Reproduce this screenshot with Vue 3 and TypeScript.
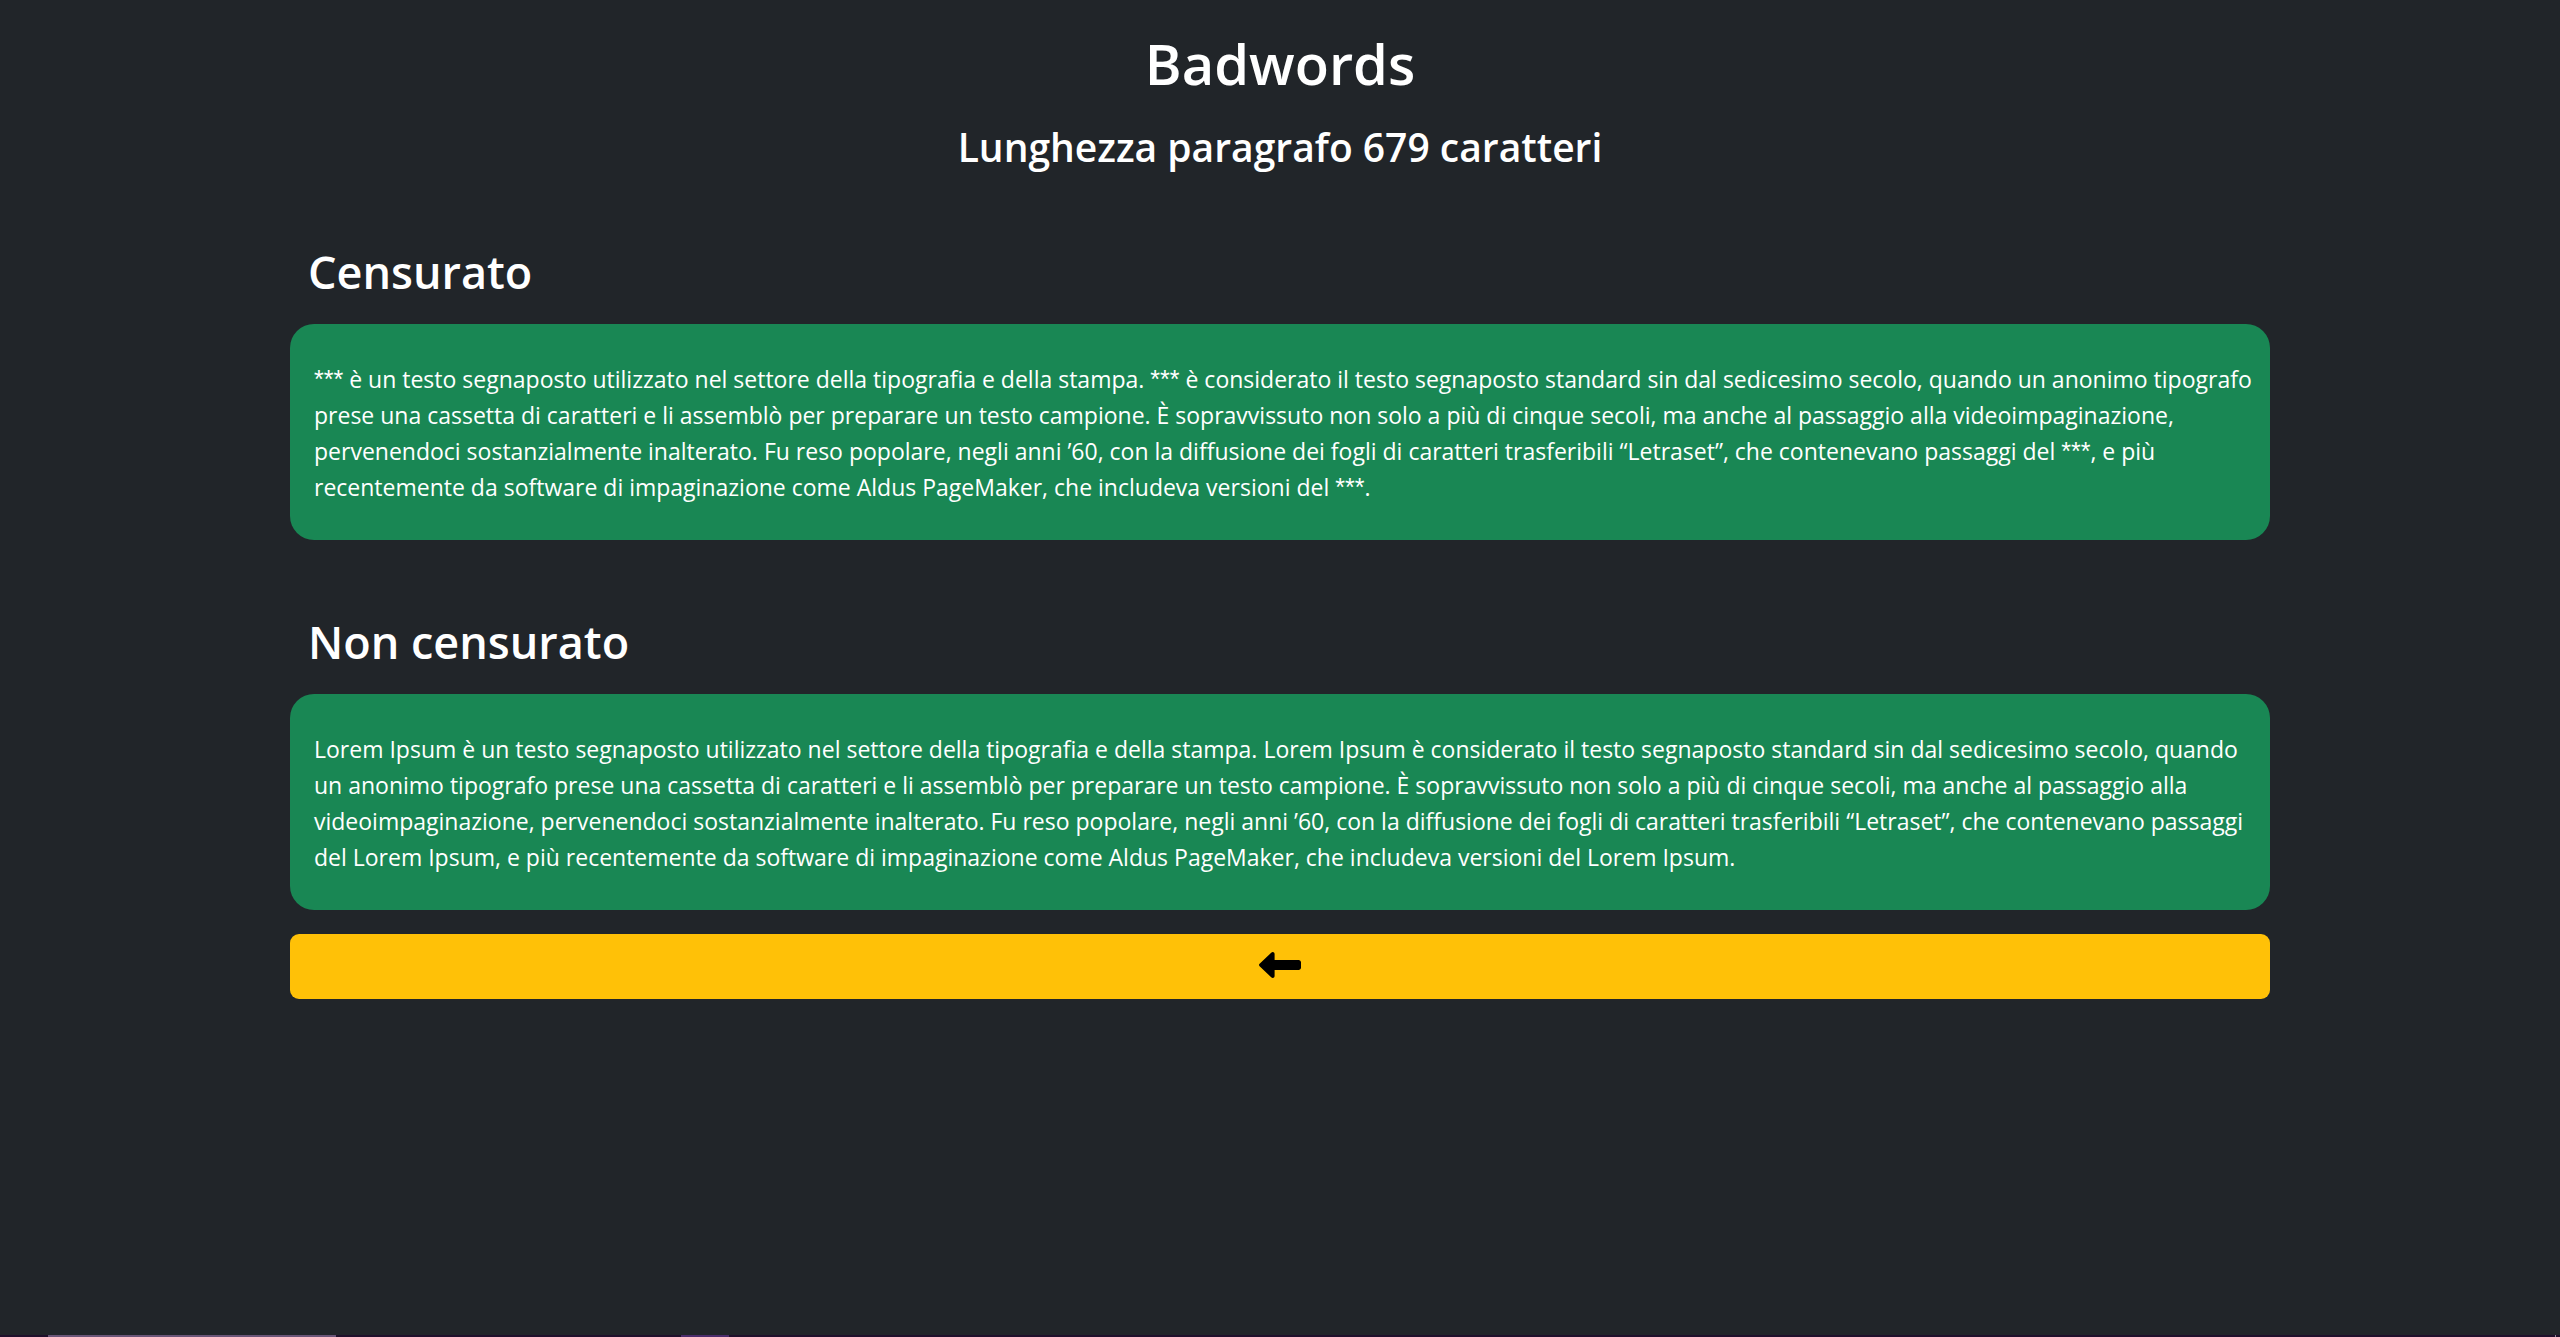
<script setup lang="ts">
interface Block {
  id: string
  title: string
  parts: string[]
}

const badword = 'Lorem Ipsum'
const mask = '***'

const original: string =
  'Lorem Ipsum è un testo segnaposto utilizzato nel settore della tipografia e della stampa. Lorem Ipsum è considerato il testo segnaposto standard sin dal sedicesimo secolo, quando un anonimo tipografo prese una cassetta di caratteri e li assemblò per preparare un testo campione. È sopravvissuto non solo a più di cinque secoli, ma anche al passaggio alla videoimpaginazione, pervenendoci sostanzialmente inalterato. Fu reso popolare, negli anni ’60, con la diffusione dei fogli di caratteri trasferibili “Letraset”, che contenevano passaggi del Lorem Ipsum, e più recentemente da software di impaginazione come Aldus PageMaker, che includeva versioni del Lorem Ipsum.'

const length = 679

// The censored block shows the mask between each pair of neighbouring parts.
const blocks: Block[] = [
  { id: 'censored', title: 'Censurato', parts: original.split(badword) },
  { id: 'plain', title: 'Non censurato', parts: [original] },
]

function goBack(): void {
  window.history.back()
}
</script>

<template>
  <div class="page">
    <main class="container">
      <header class="heading">
        <h1>Badwords</h1>
        <h3>Lunghezza paragrafo {{ length }} caratteri</h3>
      </header>

      <section v-for="block in blocks" :key="block.id" class="block" :aria-labelledby="block.id">
        <h2 :id="block.id">{{ block.title }}</h2>
        <div class="card">
          <p>
            <template v-for="(part, i) in block.parts" :key="i"><span v-if="i > 0" class="mask">{{ mask }}</span>{{ part }}</template>
          </p>
        </div>
      </section>

      <button class="back" type="button" aria-label="Indietro" @click="goBack">
        <svg viewBox="0 0 42 26" width="42" height="26" aria-hidden="true">
          <path
            d="M0.6 11.8 12.2 0.7C13.6-.6 15.6.2 15.6 2V8H39.5C41 8 42 9 42 10.5V15.5C42 17 41 18 39.5 18H15.6V24C15.6 25.8 13.6 26.6 12.2 25.3L0.6 14.2C-.2 13.4-.2 12.6.6 11.8Z"
          />
        </svg>
      </button>
    </main>

    <div class="taskbar" aria-hidden="true">
      <span class="tab tab-wide"></span>
      <span class="tab tab-small"></span>
      <span class="divider"></span>
    </div>
  </div>
</template>

<style>
body {
  margin: 0;
  background: #212529;
}
</style>

<style scoped>
.page {
  display: flex;
  flex-direction: column;
  min-height: 100vh;
  background: #212529;
  color: #fff;
  font-family: 'Segoe UI', 'Open Sans', 'Noto Sans', sans-serif;
  font-size: 23px;
  line-height: 36px;
}

.container {
  box-sizing: border-box;
  flex: 1;
  width: 100%;
  max-width: 1980px;
  margin: 0 auto;
  padding-top: 27px;
}

h1,
h2,
h3,
p {
  margin: 0;
}

h1,
h2,
h3 {
  font-weight: 600;
}

.heading {
  display: flex;
  flex-direction: column;
  gap: 24px;
  text-align: center;
}

h1 {
  font-size: 56px;
  line-height: 72px;
}

h2 {
  padding: 0 18px 23px;
  font-size: 45px;
  line-height: 58px;
}

h3 {
  font-size: 39px;
  line-height: 47px;
}

.block {
  padding-top: 73px;
}

.card {
  padding: 37px 8px 35px 24px;
  border-radius: 24px;
  background: #198754;
}

.mask {
  font-family: 'Liberation Sans', Arial, sans-serif;
  font-size: 25px;
  line-height: 1;
}

.back {
  display: flex;
  align-items: center;
  justify-content: center;
  width: 100%;
  height: 65px;
  margin-top: 24px;
  padding: 0 0 3px;
  border: 0;
  border-radius: 9px;
  background: #ffc107;
  color: #000;
  cursor: pointer;
}

.back svg {
  fill: currentColor;
}

.taskbar {
  display: flex;
  height: 2px;
  padding: 0 4px 0 48px;
  background: #20102c;
}

.tab-wide {
  width: 288px;
  background: #6a5578;
}

.tab-small {
  width: 48px;
  margin-left: 345px;
  background: #4b2c6b;
}

.divider {
  width: 1px;
  margin-left: auto;
  background: #8d8496;
}
</style>
